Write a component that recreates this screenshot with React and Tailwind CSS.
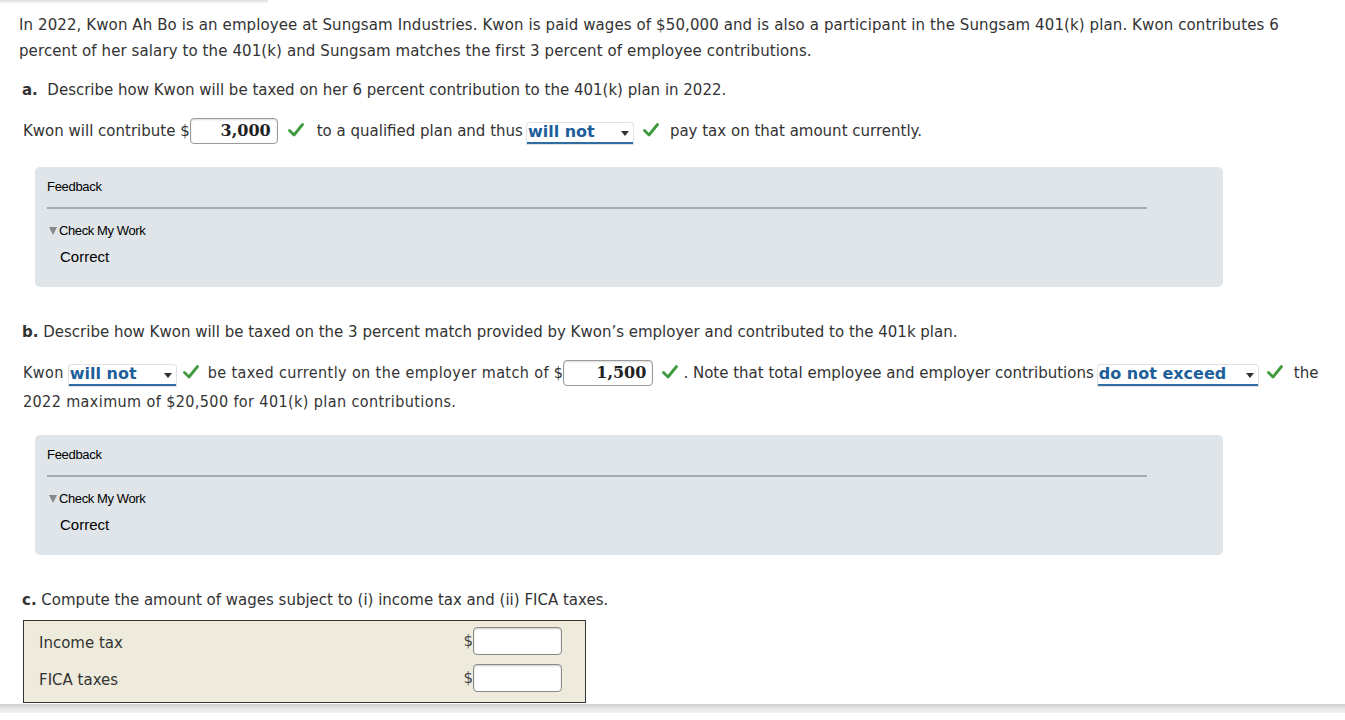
import React from "react";

const Check = () => (
  <svg width="16" height="16" viewBox="0 0 16 16" className="inline-block align-[-2px]">
    <path d="M1.5 8.5 L6 13 L14.5 2.5" fill="none" stroke="#3f9a3f" strokeWidth="2.8" strokeLinecap="round" strokeLinejoin="round" />
  </svg>
);

const Pick = ({ value, width }) => (
  <span
    className="relative inline-flex items-center bg-white border-b-2 border-[#2f6da3] rounded-t-[3px] shadow-[0_0_0_1px_#e2e2e2] h-[21px] align-[-3px] pl-[1px]"
    style={{ width }}
  >
    <span className="font-bold text-[#1d5f9b] leading-none text-[16px]">{value}</span>
    <span className="absolute right-[4px] top-[8px] w-0 h-0 border-l-[4px] border-r-[4px] border-t-[5px] border-l-transparent border-r-transparent border-t-[#333]" />
  </span>
);

const Amount = ({ value, width }) => (
  <span
    className="inline-flex items-center justify-end bg-white border border-[#9a9a9a] rounded-[4px] h-[26px] pr-[6px] align-middle shadow-[inset_0_1px_2px_rgba(0,0,0,0.15)] font-['DejaVu_Serif',serif] font-bold text-[16px] text-[#222]"
    style={{ width }}
  >
    {value}
  </span>
);

const Feedback = () => (
  <div className="ml-[35px] w-[1188px] h-[120px] bg-[#dfe5e8] rounded-[5px] pt-[12px] pl-[12px] font-['Liberation_Sans',sans-serif] text-black">
    <div className="text-[13px] leading-[16px] tracking-[-0.3px]">Feedback</div>
    <div className="mt-[12px] w-[1100px] h-[2px] bg-[#a5abae]" />
    <div className="mt-[14px] flex items-center text-[13px] leading-[16px] tracking-[-0.4px]">
      <span className="ml-[2px] mr-[2px] w-0 h-0 border-l-[4px] border-r-[4px] border-t-[8px] border-l-transparent border-r-transparent border-t-[#888]" />
      Check My Work
    </div>
    <div className="mt-[9px] ml-[13px] text-[15px] leading-[17px]">Correct</div>
  </div>
);

const narrow = "font-['DejaVu_Sans_Condensed','Liberation_Sans',sans-serif] text-[16px] tracking-[0.4px]";

export default function App() {
  return (
    <div className="relative w-[1345px] h-[720px] overflow-hidden bg-white text-[#333] font-['DejaVu_Sans',Verdana,sans-serif] text-[15px]">
      <div className="absolute left-0 top-0 w-[268px] h-[4px] bg-gradient-to-b from-[#dcdcdc] to-white rounded-br-[4px]" />

      <div className="pt-[12px] pl-[19px] pr-[40px]">
        <p className="leading-[26px] tracking-[0.1px]">
          In 2022, Kwon Ah Bo is an employee at Sungsam Industries. Kwon is paid wages of $50,000 and is also a participant in the Sungsam 401(k) plan. Kwon contributes 6 percent of her salary to the 401(k) and Sungsam matches the first 3 percent of employee contributions.
        </p>
      </div>

      <div className="mt-[16px] pl-[22px] leading-[20px]">
        <span className="font-bold">a.</span>&nbsp; Describe how Kwon will be taxed on her 6 percent contribution to the 401(k) plan in 2022.
      </div>

      <div className="mt-[17px] pl-[23px] flex items-center h-[28px] whitespace-nowrap">
        <span>Kwon will contribute $</span>
        <Amount value="3,000" width={88} />
        <span className="ml-[10px] mr-[13px]"><Check /></span>
        <span>to a qualified plan and thus</span>
        <span className="ml-[4px]"><Pick value="will not" width={106} /></span>
        <span className="ml-[10px] mr-[11px]"><Check /></span>
        <span>pay tax on that amount currently.</span>
      </div>

      <div className="mt-[22px]">
        <Feedback />
      </div>

      <div className="mt-[35px] pl-[22px] leading-[20px]">
        <span className="font-bold">b.</span> Describe how Kwon will be taxed on the 3 percent match provided by Kwon’s employer and contributed to the 401k plan.
      </div>

      <div className="mt-[17px] pl-[23px] flex items-center h-[28px] whitespace-nowrap">
        <span className={narrow}>Kwon</span>
        <span className="ml-[5px]"><Pick value="will not" width={107} /></span>
        <span className="ml-[7px] mr-[9px]"><Check /></span>
        <span className={narrow}>be taxed currently on the employer match of $</span>
        <Amount value="1,500" width={90} />
        <span className="ml-[9px]"><Check /></span>
        <span className="ml-[5px]">. Note that total employee and employer contributions</span>
        <span className="ml-[4px]"><Pick value="do not exceed" width={160} /></span>
        <span className="ml-[9px] mr-[11px]"><Check /></span>
        <span>the</span>
      </div>
      <div className={`mt-[5px] pl-[23px] leading-[20px] ${narrow}`}>
        2022 maximum of $20,500 for 401(k) plan contributions.
      </div>

      <div className="mt-[23px]">
        <Feedback />
      </div>

      <div className="mt-[35px] pl-[22px] leading-[20px]">
        <span className="font-bold">c.</span> Compute the amount of wages subject to (i) income tax and (ii) FICA taxes.
      </div>

      <div className="mt-[10px] ml-[23px] w-[563px] h-[83px] bg-[#eeebdc] border border-[#333] pl-[15px] pr-[23px] pt-[6px]">
        <div className="flex items-center justify-between h-[28px]">
          <span className="pt-[5px]">Income tax</span>
          <span className="flex items-center">
            <span className="text-[#444]">$</span>
            <span className="w-[89px] h-[28px] bg-white border border-[#8a8a8a] rounded-[4px] shadow-[inset_0_1px_2px_rgba(0,0,0,0.2)]" />
          </span>
        </div>
        <div className="mt-[9px] flex items-center justify-between h-[28px]">
          <span className="pt-[5px]">FICA taxes</span>
          <span className="flex items-center">
            <span className="text-[#444]">$</span>
            <span className="w-[89px] h-[28px] bg-white border border-[#8a8a8a] rounded-[4px] shadow-[inset_0_1px_2px_rgba(0,0,0,0.2)]" />
          </span>
        </div>
      </div>

      <div className="absolute left-0 bottom-[7px] w-full h-[9px] bg-gradient-to-b from-[#d0d0d0] via-[#e6e6e6] to-[#f2f2f2]" />
    </div>
  );
}
